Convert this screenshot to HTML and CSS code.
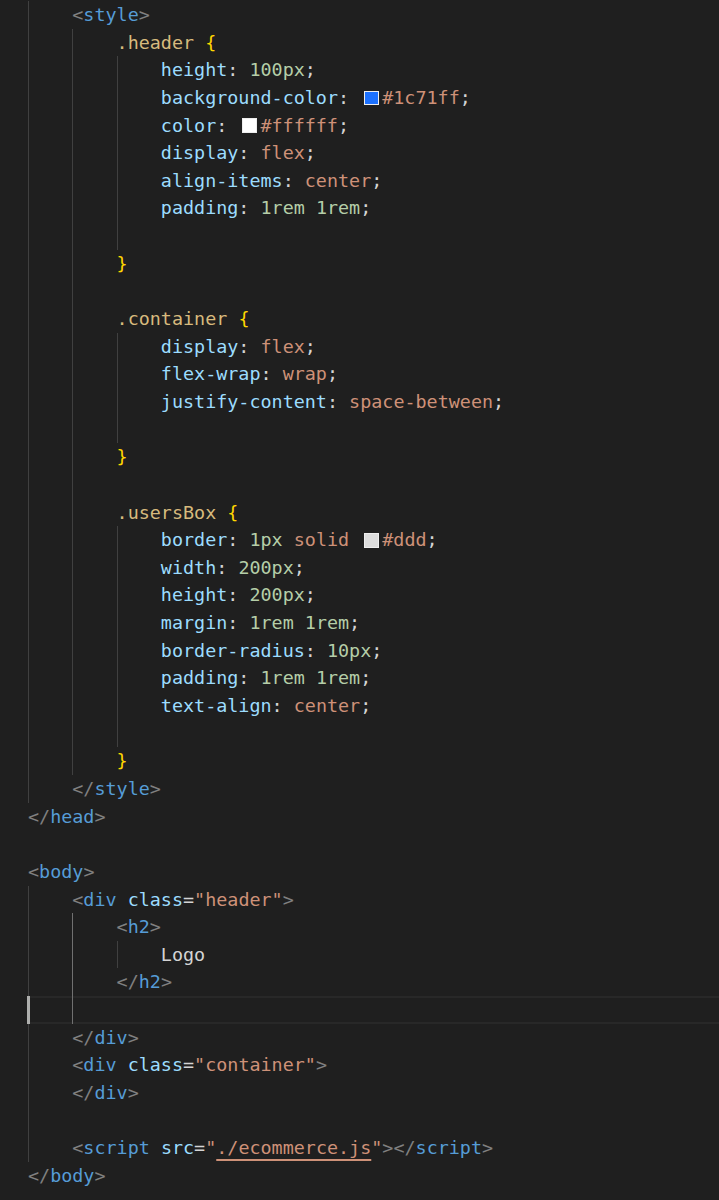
FILE: index.html
```html
<!DOCTYPE html>
<html lang="en">
<head>
<meta charset="utf-8">
<title>Editor</title>
<link rel="stylesheet" href="styles.css">
</head>
<body>
<div class="editor">
<div class="line"><span class="ind"></span><span class="code"><span class="p">&lt;</span><span class="t">style</span><span class="p">&gt;</span></span></div>
<div class="line"><span class="ind"></span><span class="ind"></span><span class="code"><span class="sel">.header</span> <span class="br">{</span></span></div>
<div class="line"><span class="ind"></span><span class="ind"></span><span class="ind"></span><span class="code"><span class="k">height</span>: <span class="n">100px</span>;</span></div>
<div class="line"><span class="ind"></span><span class="ind"></span><span class="ind"></span><span class="code"><span class="k">background-color</span>: <span class="sw sw-blue"></span><span class="v">#1c71ff</span>;</span></div>
<div class="line"><span class="ind"></span><span class="ind"></span><span class="ind"></span><span class="code"><span class="k">color</span>: <span class="sw sw-white"></span><span class="v">#ffffff</span>;</span></div>
<div class="line"><span class="ind"></span><span class="ind"></span><span class="ind"></span><span class="code"><span class="k">display</span>: <span class="v">flex</span>;</span></div>
<div class="line"><span class="ind"></span><span class="ind"></span><span class="ind"></span><span class="code"><span class="k">align-items</span>: <span class="v">center</span>;</span></div>
<div class="line"><span class="ind"></span><span class="ind"></span><span class="ind"></span><span class="code"><span class="k">padding</span>: <span class="n">1rem</span> <span class="n">1rem</span>;</span></div>
<div class="line"><span class="ind"></span><span class="ind"></span><span class="ind"></span></div>
<div class="line"><span class="ind"></span><span class="ind"></span><span class="code"><span class="br">}</span></span></div>
<div class="line"><span class="ind"></span><span class="ind"></span></div>
<div class="line"><span class="ind"></span><span class="ind"></span><span class="code"><span class="sel">.container</span> <span class="br">{</span></span></div>
<div class="line"><span class="ind"></span><span class="ind"></span><span class="ind"></span><span class="code"><span class="k">display</span>: <span class="v">flex</span>;</span></div>
<div class="line"><span class="ind"></span><span class="ind"></span><span class="ind"></span><span class="code"><span class="k">flex-wrap</span>: <span class="v">wrap</span>;</span></div>
<div class="line"><span class="ind"></span><span class="ind"></span><span class="ind"></span><span class="code"><span class="k">justify-content</span>: <span class="v">space-between</span>;</span></div>
<div class="line"><span class="ind"></span><span class="ind"></span><span class="ind"></span></div>
<div class="line"><span class="ind"></span><span class="ind"></span><span class="code"><span class="br">}</span></span></div>
<div class="line"><span class="ind"></span><span class="ind"></span></div>
<div class="line"><span class="ind"></span><span class="ind"></span><span class="code"><span class="sel">.usersBox</span> <span class="br">{</span></span></div>
<div class="line"><span class="ind"></span><span class="ind"></span><span class="ind"></span><span class="code"><span class="k">border</span>: <span class="n">1px</span> <span class="v">solid</span> <span class="sw sw-grey"></span><span class="v">#ddd</span>;</span></div>
<div class="line"><span class="ind"></span><span class="ind"></span><span class="ind"></span><span class="code"><span class="k">width</span>: <span class="n">200px</span>;</span></div>
<div class="line"><span class="ind"></span><span class="ind"></span><span class="ind"></span><span class="code"><span class="k">height</span>: <span class="n">200px</span>;</span></div>
<div class="line"><span class="ind"></span><span class="ind"></span><span class="ind"></span><span class="code"><span class="k">margin</span>: <span class="n">1rem</span> <span class="n">1rem</span>;</span></div>
<div class="line"><span class="ind"></span><span class="ind"></span><span class="ind"></span><span class="code"><span class="k">border-radius</span>: <span class="n">10px</span>;</span></div>
<div class="line"><span class="ind"></span><span class="ind"></span><span class="ind"></span><span class="code"><span class="k">padding</span>: <span class="n">1rem</span> <span class="n">1rem</span>;</span></div>
<div class="line"><span class="ind"></span><span class="ind"></span><span class="ind"></span><span class="code"><span class="k">text-align</span>: <span class="v">center</span>;</span></div>
<div class="line"><span class="ind"></span><span class="ind"></span><span class="ind"></span></div>
<div class="line"><span class="ind"></span><span class="ind"></span><span class="code"><span class="br">}</span></span></div>
<div class="line"><span class="ind"></span><span class="code"><span class="p">&lt;/</span><span class="t">style</span><span class="p">&gt;</span></span></div>
<div class="line"><span class="code"><span class="p">&lt;/</span><span class="t">head</span><span class="p">&gt;</span></span></div>
<div class="line"></div>
<div class="line"><span class="code"><span class="p">&lt;</span><span class="t">body</span><span class="p">&gt;</span></span></div>
<div class="line"><span class="ind"></span><span class="code"><span class="p">&lt;</span><span class="t">div</span> <span class="a">class</span>=<span class="s">"header"</span><span class="p">&gt;</span></span></div>
<div class="line"><span class="ind"></span><span class="ind active"></span><span class="code"><span class="p">&lt;</span><span class="t">h2</span><span class="p">&gt;</span></span></div>
<div class="line"><span class="ind"></span><span class="ind active"></span><span class="ind"></span><span class="code">Logo</span></div>
<div class="line"><span class="ind"></span><span class="ind active"></span><span class="code"><span class="p">&lt;/</span><span class="t">h2</span><span class="p">&gt;</span></span></div>
<div class="line current"><span class="ind"></span><span class="ind active"></span><span class="cursor"></span></div>
<div class="line"><span class="ind"></span><span class="code"><span class="p">&lt;/</span><span class="t">div</span><span class="p">&gt;</span></span></div>
<div class="line"><span class="ind"></span><span class="code"><span class="p">&lt;</span><span class="t">div</span> <span class="a">class</span>=<span class="s">"container"</span><span class="p">&gt;</span></span></div>
<div class="line"><span class="ind"></span><span class="code"><span class="p">&lt;/</span><span class="t">div</span><span class="p">&gt;</span></span></div>
<div class="line"><span class="ind"></span></div>
<div class="line"><span class="ind"></span><span class="code"><span class="p">&lt;</span><span class="t">script</span> <span class="a">src</span>=<span class="s">"<span class="link">./ecommerce.js</span>"</span><span class="p">&gt;&lt;/</span><span class="t">script</span><span class="p">&gt;</span></span></div>
<div class="line"><span class="code"><span class="p">&lt;/</span><span class="t">body</span><span class="p">&gt;</span></span></div>
</div>
</body>
</html>
```

FILE: styles.css
```css
html, body {
  margin: 0;
  padding: 0;
  background: #1f1f1f;
}

body {
  font-family: "DejaVu Sans Mono", "Liberation Mono", monospace;
  font-size: 18.4px;
  color: #d4d4d4;
}

.editor {
  padding: 1px 0 0 28px;
  min-height: 1200px;
  box-sizing: border-box;
}

.line {
  display: flex;
  height: 27.65px;
  line-height: 27.65px;
  white-space: pre;
  position: relative;
}

.ind {
  flex: 0 0 4ch;
  box-sizing: border-box;
  border-left: 1px solid #404040;
}

.ind.active {
  border-left-color: #707070;
}

.code {
  white-space: pre;
}

.current {
  box-shadow: inset 0 2px 0 #282828, inset 0 -2px 0 #282828;
}

.cursor {
  position: absolute;
  left: -1px;
  top: 0;
  bottom: 0;
  width: 3px;
  background: #aeafad;
}

.p { color: #808080; }
.t { color: #569cd6; }
.a { color: #9cdcfe; }
.s { color: #ce9178; }
.sel { color: #d7ba7d; }
.br { color: #ffd700; }
.k { color: #9cdcfe; }
.n { color: #b5cea8; }
.v { color: #ce9178; }

.link {
  text-decoration: underline;
  text-decoration-color: #ce9178;
  text-decoration-thickness: 1.5px;
  text-underline-offset: 5px;
}

.sw {
  display: inline-block;
  width: 0.8em;
  height: 0.8em;
  margin: 0 0.2em;
  box-sizing: border-box;
  border: 1.5px solid #eeeeee;
  vertical-align: middle;
  position: relative;
  top: -1px;
}

.sw-blue { background: #1c71ff; }
.sw-white { background: #ffffff; }
.sw-grey { background: #dddddd; }
```
